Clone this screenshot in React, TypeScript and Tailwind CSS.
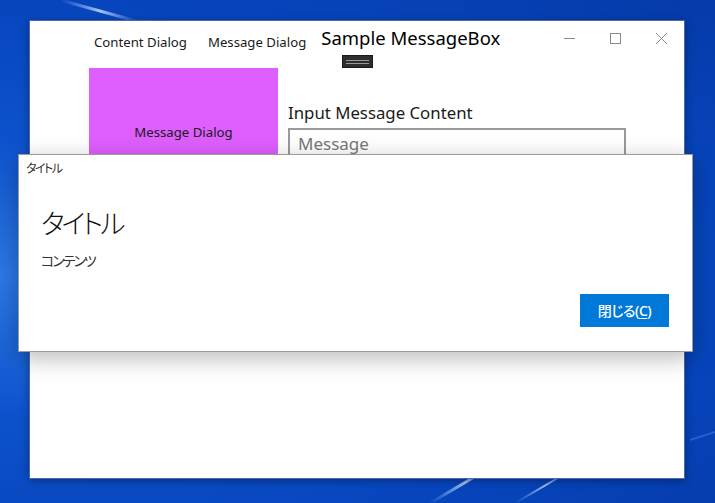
const ui = { fontFamily: '"Noto Sans", "Noto Sans CJK JP", sans-serif', fontFeatureSettings: '"palt"' };

function Desktop({ children }: { children: React.ReactNode }) {
  return (
    <div
      className="relative w-[715px] h-[503px] overflow-hidden bg-[radial-gradient(ellipse_at_0%_55%,#2c78e6_0%,#0d52cc_35%,#0745bd_70%,#053aa8_100%)]"
      style={ui}
    >
      {/* light streaks of the wallpaper */}
      <svg className="absolute inset-0" width="715" height="503" viewBox="0 0 715 503">
        <defs>
          <linearGradient id="s1" x1="0" y1="0" x2="1" y2="0">
            <stop offset="0" stopColor="#9ec8ff" stopOpacity="0" />
            <stop offset="0.5" stopColor="#cfe4ff" stopOpacity="0.8" />
            <stop offset="1" stopColor="#9ec8ff" stopOpacity="0" />
          </linearGradient>
        </defs>
        <path d="M60 0 L140 22" stroke="url(#s1)" strokeWidth="3" />
        <path d="M430 503 L500 462" stroke="url(#s1)" strokeWidth="3" />
        <path d="M515 503 L575 468" stroke="url(#s1)" strokeWidth="2" />
        <path d="M690 440 L715 432" stroke="#6aa6ff" strokeOpacity="0.3" strokeWidth="2" />
      </svg>
      {children}
    </div>
  );
}

function AppWindow() {
  return (
    <div className="absolute left-[29px] top-[20px] w-[656px] h-[459px] bg-white border border-[#4a6aa6] shadow-[0_2px_8px_rgba(0,0,0,0.35)]">
      {/* title row */}
      <div className="flex items-start h-[47px]">
        <div className="flex gap-[21px] pl-[64px] pt-[12px] text-[13.2px] leading-[18px] text-[#1a1a1a]">
          <span>Content Dialog</span>
          <span>Message Dialog</span>
        </div>
        <div className="flex flex-col items-start ml-[15px] pt-[4px]">
          <span className="text-[18.5px] leading-[26px] text-black">Sample MessageBox</span>
          <div className="mt-[4px] ml-[21px] w-[31px] h-[13px] bg-[#2e2e2e] border border-[#1a1a1a] flex flex-col justify-center items-center gap-[2px]">
            <div className="w-[23px] h-px bg-[#9a9a9a]" />
            <div className="w-[23px] h-px bg-[#9a9a9a]" />
          </div>
        </div>
        <div className="ml-auto flex items-center h-[34px] text-[#7a7a7a]">
          <div className="w-[46px] flex justify-center">
            <svg width="11" height="11" viewBox="0 0 11 11"><path d="M0 5.5 H11" stroke="#8a8a8a" /></svg>
          </div>
          <div className="w-[46px] flex justify-center">
            <svg width="11" height="11" viewBox="0 0 11 11"><rect x="0.5" y="0.5" width="10" height="10" fill="none" stroke="#8a8a8a" /></svg>
          </div>
          <div className="w-[46px] flex justify-center">
            <svg width="11" height="11" viewBox="0 0 11 11"><path d="M0 0 L11 11 M11 0 L0 11" stroke="#8a8a8a" /></svg>
          </div>
        </div>
      </div>
      {/* content */}
      <div className="flex pl-[59px]">
        <div className="w-[189px] h-[110px] bg-[#de5ffd] flex justify-center pt-[55px] text-[13.2px] text-[#1a1a1a]">
          Message Dialog
        </div>
        <div className="pl-[10px] pt-[33px]">
          <div className="text-[16.8px] leading-[24px] text-[#1a1a1a]">Input Message Content</div>
          <div className="mt-[3px] w-[338px] h-[32px] border-2 border-[#9a9a9a] px-[8px] text-[17px] leading-[28px] text-[#777]">
            Message
          </div>
        </div>
      </div>
    </div>
  );
}

function MessageDialog() {
  return (
    <div className="absolute left-[18px] top-[154px] w-[675px] h-[198px] bg-white border border-[#9a9a9a] shadow-[0_6px_22px_rgba(0,0,0,0.28)] flex flex-col">
      <div className="pl-[7px] pt-[6px] text-[12px] leading-[16px] tracking-[-1.5px] text-[#333]">タイトル</div>
      <div className="pl-[22px] pt-[30px] text-[27px] leading-[34px] font-light tracking-[-3px] text-[#111]">タイトル</div>
      <div className="pl-[22px] pt-[10px] text-[14px] leading-[20px] tracking-[-2px] text-[#333]">コンテンツ</div>
      <div className="mt-auto flex justify-end pr-[23px] pb-[24px]">
        <button className="w-[89px] h-[33px] bg-[#0078d7] text-white text-[14px] font-medium tracking-[-0.5px]">
          閉じる(<span className="underline underline-offset-2">C</span>)
        </button>
      </div>
    </div>
  );
}

export default function App() {
  return (
    <Desktop>
      <AppWindow />
      <MessageDialog />
    </Desktop>
  );
}
